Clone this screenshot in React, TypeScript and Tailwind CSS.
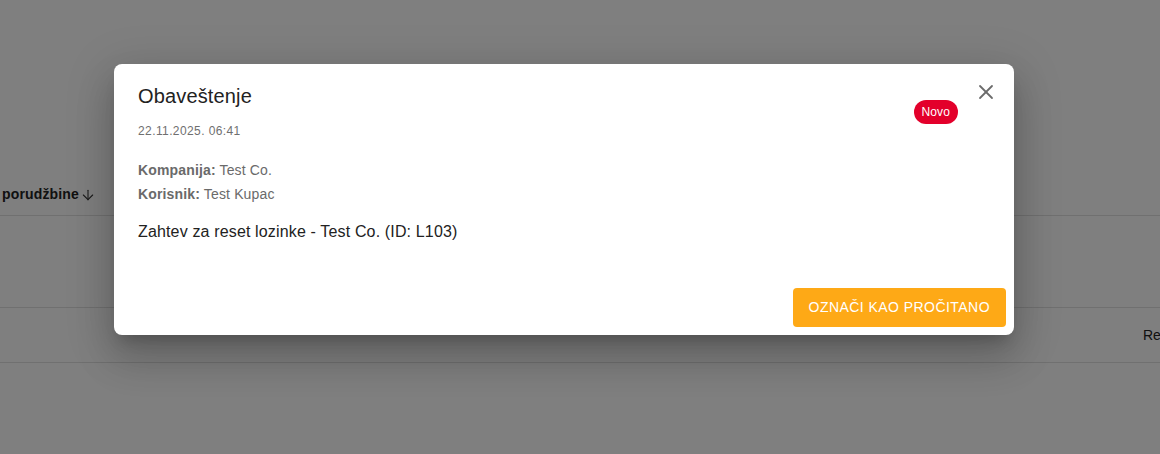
import { X, ArrowDown } from "lucide-react";

export default function App() {
  return (
    <div className="relative h-[454px] w-[1160px] overflow-hidden bg-white font-['Liberation_Sans',Arial,sans-serif] text-[#1f1f1f]">
      {/* page behind the dialog */}
      <div className="pt-[174px]">
        <div className="flex h-[42px] items-center border-b border-[#e0e0e0] pl-[2px]">
          <span className="text-[14px] font-bold tracking-[0.15px] text-[#222]">porudžbine</span>
          <ArrowDown className="ml-[1px] h-[16px] w-[16px] text-[#333]" strokeWidth={1.6} />
        </div>
        <div className="h-[92px] border-b border-[#e0e0e0]" />
        <div className="flex h-[55px] items-center justify-end border-b border-[#e0e0e0]">
          <span className="mr-[-5px] w-[22px] overflow-hidden text-[14px] text-[#222]">Re</span>
        </div>
      </div>

      {/* backdrop */}
      <div className="absolute inset-0 bg-black/50" />

      {/* dialog */}
      <div className="absolute left-[114px] top-[64px] flex h-[271px] w-[900px] flex-col rounded-[8px] bg-white shadow-[0_11px_15px_-7px_rgba(0,0,0,0.2),0_24px_38px_3px_rgba(0,0,0,0.14),0_9px_46px_8px_rgba(0,0,0,0.12)]">
        <button className="absolute right-[16px] top-[16px] text-[#6b6b6b]">
          <X className="h-[24px] w-[24px]" strokeWidth={1.8} />
        </button>

        <div className="flex items-start justify-between pl-[24px] pr-[56px] pt-[16px]">
          <div>
            <h2 className="text-[20px] leading-[32px] tracking-[0.15px] text-[#222]">Obaveštenje</h2>
            <p className="mt-[9px] text-[12px] leading-[20px] tracking-[0.4px] text-[#6f6f6f]">22.11.2025. 06:41</p>
          </div>
          <span className="mt-[20px] flex h-[24px] items-center rounded-full bg-[#e3002b] px-[8px] text-[12px] tracking-[0.1px] text-white">
            Novo
          </span>
        </div>

        <div className="px-[24px] pt-[17px] tracking-[0.15px]">
          <p className="text-[14px] leading-[24px] text-[#6a6a6a]">
            <span className="font-bold">Kompanija:</span> Test Co.
          </p>
          <p className="text-[14px] leading-[24px] text-[#6a6a6a]">
            <span className="font-bold">Korisnik:</span> Test Kupac
          </p>
          <p className="mt-[14px] text-[16px] leading-[24px] text-[#222]">
            Zahtev za reset lozinke - Test Co. (ID: L103)
          </p>
        </div>

        <div className="mt-auto flex justify-end p-[8px]">
          <button className="flex h-[39px] items-center rounded-[4px] bg-[#fea916] px-[16px] text-[14px] uppercase tracking-[0.45px] text-white">
            Označi kao pročitano
          </button>
        </div>
      </div>
    </div>
  );
}
